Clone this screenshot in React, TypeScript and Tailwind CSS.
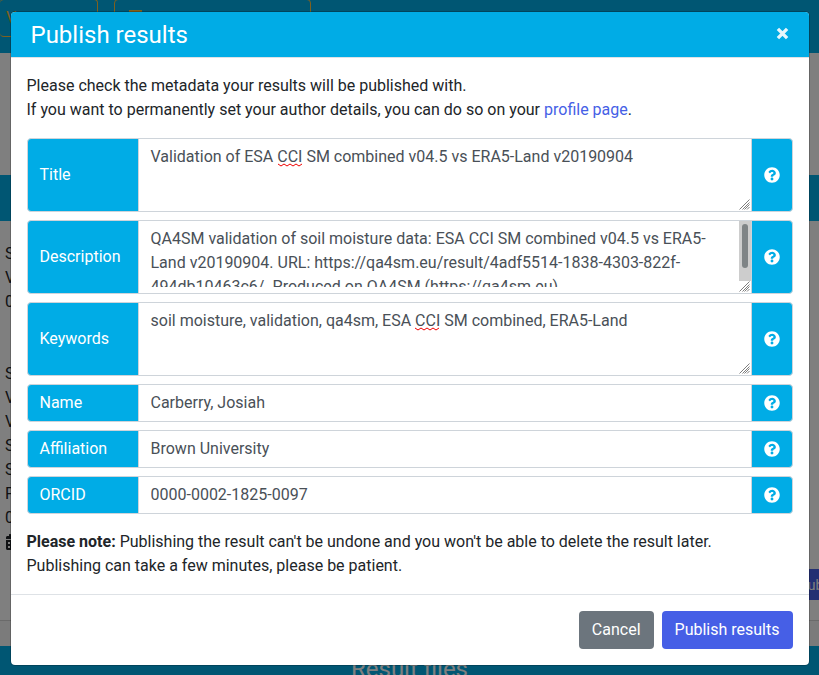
import type { ReactNode } from "react";
import { FaCalendarAlt, FaQuestionCircle } from "react-icons/fa";

const GROUP = "flex items-stretch overflow-hidden rounded border border-[#ced4da] bg-[#00ace6]";
const LABEL = "flex w-[110px] shrink-0 items-center px-3 text-white";

function Field({ id, label, children }: { id: string; label: string; children: ReactNode }) {
  return (
    <div className={GROUP}>
      <label htmlFor={id} className={LABEL}>
        {label}
      </label>
      <div className="relative flex min-w-0 flex-1 border-x border-[#ced4da] bg-white">{children}</div>
      <button type="button" aria-label={`Help for ${label}`} className="flex w-10 shrink-0 items-center justify-center text-white">
        <FaQuestionCircle size={16} />
      </button>
    </div>
  );
}

function Grip() {
  return (
    <svg className="pointer-events-none absolute right-px bottom-px" width="11" height="11" viewBox="0 0 11 11" fill="none" stroke="#6f6f6f" strokeWidth="0.9" aria-hidden="true">
      <path d="M0.5 10.5L10.5 0.5M3.5 10.5L10.5 3.5M5.5 10.5L10.5 5.5M8 10.5L10.5 8" />
    </svg>
  );
}

function Squiggle({ place }: { place: string }) {
  return (
    <svg className={`pointer-events-none absolute top-6 ${place}`} width="25" height="4" viewBox="0 0 25 4" fill="none" stroke="#f00000" aria-hidden="true">
      <path d="M0 1L3 3L6 1L9 3L12 1L15 3L18 1L21 3L24 1" />
    </svg>
  );
}

function TextBox({ id, label, value, squiggle, scrolls }: { id: string; label: string; value: string; squiggle?: string; scrolls?: boolean }) {
  return (
    <Field id={id} label={label}>
      <textarea
        id={id}
        rows={2}
        spellCheck={false}
        defaultValue={value}
        className={`my-1.5 block h-[60px] w-full resize-none bg-transparent pl-3 text-[#495057] outline-none [scrollbar-width:none] ${scrolls ? "pr-6" : "pr-3"}`}
      />
      {squiggle && <Squiggle place={squiggle} />}
      {scrolls && (
        <div className="absolute top-0 right-0 h-[60px] w-3 bg-[#cdcdcd]">
          <div className="mx-auto mt-[3px] h-11 w-1.5 rounded-full bg-[#7f8486]" />
        </div>
      )}
      <Grip />
    </Field>
  );
}

function LineBox({ id, label, value }: { id: string; label: string; value: string }) {
  return (
    <Field id={id} label={label}>
      <input id={id} type="text" defaultValue={value} className="h-9 w-full bg-transparent px-3 pb-0.5 text-[#495057] outline-none" />
    </Field>
  );
}

function Backdrop() {
  return (
    <div className="absolute inset-0 overflow-hidden bg-white text-[#212529]" aria-hidden="true">
      <div className="flex h-[53px] items-start gap-4 overflow-hidden bg-[#00ace6]">
        <div className="-mt-px flex h-[38px] w-[98px] items-center rounded border border-l-0 border-[#ffc03c] pl-1.5 text-[#ffc03c]">
          V
        </div>
        <div className="-mt-px h-[38px] w-[197px] rounded border border-[#ffc03c] pt-2.5 pl-3.5">
          <div className="h-[3px] w-[13px] bg-[#ffc03c]" />
        </div>
      </div>
      <div className="h-[122px]" />
      <div className="h-[46px] bg-[#00ace6]" />
      <div className="relative h-[400px] overflow-hidden border-b border-[#d5d5d5] pt-[21px] pl-[5px]">
        <div>S</div>
        <div>V</div>
        <div>0</div>
        <div className="h-12" />
        <div>S</div>
        <div>V</div>
        <div>V</div>
        <div>S</div>
        <div>S</div>
        <div>P</div>
        <div>0</div>
        <div className="flex h-6 items-center">
          <FaCalendarAlt size={16} />
        </div>
        <div className="absolute right-0 bottom-5 flex h-[31px] w-[50px] items-center overflow-hidden bg-[#465fe6] pl-[30px] text-sm text-white">Publish</div>
      </div>
      <div className="h-[25px] bg-[#f7f7f7]" />
      <div className="h-[45px] bg-[#00ace6] pt-[7px] text-center text-2xl leading-8 text-white">Result files</div>
      <div className="absolute inset-0 bg-black/50" />
    </div>
  );
}

export default function App() {
  return (
    <div className="relative flow-root min-h-screen overflow-hidden font-['Roboto',sans-serif] text-base leading-6 text-[#212529]">
      <Backdrop />
      <div role="dialog" aria-labelledby="dialog-title" className="relative mx-auto mt-[11px] w-full max-w-[800px] rounded-[5px] border border-black/20 bg-white bg-clip-padding">
        <header className="flex h-[46px] items-center justify-between rounded-t border-b border-[#dee2e6] bg-[#00ace6] px-5 text-white">
          <h5 id="dialog-title" className="text-2xl">
            Publish results
          </h5>
          <button type="button" aria-label="Close" className="mb-0.5 opacity-90">
            <svg width="13" height="13" viewBox="0 0 13 13" fill="none" stroke="currentColor" strokeWidth="3.4">
              <path d="M1.9 1.9L11.1 11.1M11.1 1.9L1.9 11.1" />
            </svg>
          </button>
        </header>

        <div className="p-4">
          <p className="mb-4">
            Please check the metadata your results will be published with.
            <br />
            If you want to permanently set your author details, you can do so on your{" "}
            <a href="#profile" className="text-[#465fe6]">
              profile page
            </a>
            .
          </p>
          <form className="flex flex-col gap-2">
            <TextBox id="title" label="Title" value="Validation of ESA CCI SM combined v04.5 vs ERA5-Land v20190904" squiggle="left-[139px]" />
            <TextBox
              id="description"
              label="Description"
              value="QA4SM validation of soil moisture data: ESA CCI SM combined v04.5 vs ERA5-Land v20190904. URL: https://qa4sm.eu/result/4adf5514-1838-4303-822f-494db10463c6/. Produced on QA4SM (https://qa4sm.eu)"
              scrolls
            />
            <TextBox id="keywords" label="Keywords" value="soil moisture, validation, qa4sm, ESA CCI SM combined, ERA5-Land" squiggle="left-[276px]" />
            <LineBox id="name" label="Name" value="Carberry, Josiah" />
            <LineBox id="affiliation" label="Affiliation" value="Brown University" />
            <LineBox id="orcid" label="ORCID" value="0000-0002-1825-0097" />
          </form>
          <p className="mt-4">
            <strong className="font-bold">Please note:</strong> Publishing the result can't be undone and you won't be able to delete the result later.
            <br />
            Publishing can take a few minutes, please be patient.
          </p>
        </div>

        <footer className="flex justify-end gap-2 border-t border-[#dee2e6] p-4">
          <button type="button" className="rounded bg-[#6c757d] px-[13px] py-[7px] text-white">
            Cancel
          </button>
          <button type="button" className="rounded bg-[#465fe6] px-[13px] py-[7px] text-white">
            Publish results
          </button>
        </footer>
      </div>
    </div>
  );
}
